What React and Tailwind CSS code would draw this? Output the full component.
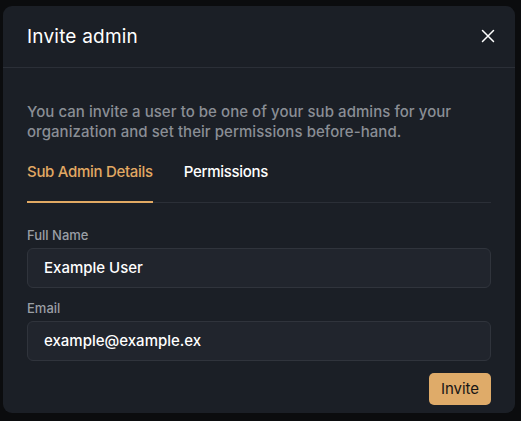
import React from "react";

export default function App() {
  return (
    <div className="w-[521px] h-[421px] bg-[#0b0c0e] pt-[6px] pl-[3px] overflow-hidden" style={{ fontFamily: "Inter, 'Noto Sans', sans-serif" }}>
      <div className="w-[512px] h-[407px] rounded-[9px] bg-[#1b1f26] flex flex-col">
        <div className="h-[62px] shrink-0 border-b border-[#2b2f37] flex items-start justify-between pl-6 pr-[20px] pt-[18px]">
          <h1 className="text-[19px] leading-[26px] text-white font-normal tracking-[0.2px]">Invite admin</h1>
          <svg width="14" height="14" viewBox="0 0 14 14" className="mt-[5px]" fill="none" stroke="#ffffff" strokeWidth="1.5" strokeLinecap="round">
            <path d="M1.5 1.5 L12.5 12.5 M12.5 1.5 L1.5 12.5" />
          </svg>
        </div>
        <div className="px-6 pt-[34px] flex flex-col">
          <p className="text-[15px] leading-[20px] text-[#8a8e95] font-medium tracking-[0.05px]">
            You can invite a user to be one of your sub admins for your organization and set their permissions before-hand.
          </p>
          <div className="mt-[20px] flex border-b border-[#2b2f37] w-[464px]">
            <div className="pb-[19px] border-b-[2px] border-[#e2a963] -mb-px text-[15px] leading-[20px] text-[#e2a963] font-medium whitespace-nowrap tracking-[-0.3px]">Sub Admin Details</div>
            <div className="ml-[31px] pb-[19px] text-[15px] leading-[20px] text-white font-medium whitespace-nowrap tracking-[-0.3px]">Permissions</div>
          </div>
          <label className="mt-[24px] text-[13px] leading-[16px] text-[#9a9ea5] font-medium">Full Name</label>
          <div className="mt-[5px] w-[464px] h-[40px] rounded-[6px] border border-[#30343c] bg-[#21252d] flex items-center pl-[16px] text-[15px] text-white font-medium">Example User</div>
          <label className="mt-[12px] text-[13px] leading-[16px] text-[#9a9ea5] font-medium">Email</label>
          <div className="mt-[5px] w-[464px] h-[40px] rounded-[6px] border border-[#30343c] bg-[#21252d] flex items-center pl-[16px] text-[15px] text-white font-medium">example@example.ex</div>
          <div className="w-[464px] flex justify-end mt-[12px]">
            <button className="w-[62px] h-[32px] rounded-[5px] bg-[#dfab69] text-[15px] text-[#151515] font-normal">Invite</button>
          </div>
        </div>
      </div>
    </div>
  );
}
